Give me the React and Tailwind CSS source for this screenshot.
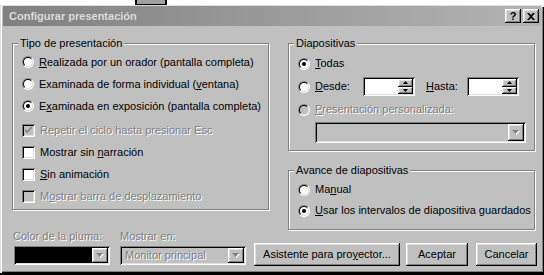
import React from 'react';

const raised =
  'shadow-[inset_-1px_-1px_0_#000,inset_1px_1px_0_#fff,inset_-2px_-2px_0_#808080,inset_2px_2px_0_#dfdfdf]';
const sunken =
  'shadow-[inset_1px_1px_0_#808080,inset_-1px_-1px_0_#fff,inset_2px_2px_0_#000,inset_-2px_-2px_0_#dfdfdf]';
const dim = 'text-[#808080] [text-shadow:1px_1px_0_#fff]';

function U({ children }) {
  return <span className="underline underline-offset-[1px] decoration-1">{children}</span>;
}

function Radio({ checked, disabled }) {
  return (
    <span className="w-[12px] h-[12px] shrink-0 rounded-full border border-t-[#808080] border-l-[#808080] border-r-white border-b-white">
      <span
        className={`flex items-center justify-center w-[10px] h-[10px] rounded-full border border-t-black border-l-black border-r-[#dfdfdf] border-b-[#dfdfdf] ${
          disabled ? 'bg-[#c0c0c0]' : 'bg-white'
        }`}
      >
        {checked && <span className="w-[4px] h-[4px] rounded-full bg-black" />}
      </span>
    </span>
  );
}

function Check({ checked, disabled }) {
  return (
    <span className={`w-[13px] h-[13px] shrink-0 flex items-center justify-center ${sunken} ${disabled ? 'bg-[#c0c0c0]' : 'bg-white'}`}>
      {checked && (
        <svg width="7" height="7" viewBox="0 0 7 7">
          <path d="M0 2 L0 4 L2 6 L7 1 L7 -1 L2 4 Z" fill={disabled ? '#808080' : '#000'} />
        </svg>
      )}
    </span>
  );
}

function Arrow({ color = '#000' }) {
  return (
    <svg width="7" height="4" viewBox="0 0 7 4">
      <path d="M0 0 H7 L3.5 4 Z" fill={color} />
    </svg>
  );
}

function DropButton({ disabled }) {
  return (
    <span className={`w-[16px] h-full flex items-center justify-center bg-[#c0c0c0] ${raised}`}>
      {disabled ? (
        <svg width="8" height="5" viewBox="0 0 8 5">
          <path d="M1 1 H8 L4.5 5 Z" fill="#fff" />
          <path d="M0 0 H7 L3.5 4 Z" fill="#808080" />
        </svg>
      ) : (
        <Arrow />
      )}
    </span>
  );
}

function Spin() {
  return (
    <div className={`w-[52px] h-[19px] flex p-[2px] bg-white ${sunken}`}>
      <div className="flex-1" />
      <div className="w-[15px] flex flex-col">
        <span className={`flex-1 flex items-center justify-center bg-[#c0c0c0] ${raised}`}>
          <svg width="5" height="3" viewBox="0 0 5 3">
            <path d="M0 3 H5 L2.5 0 Z" fill="#000" />
          </svg>
        </span>
        <span className={`flex-1 flex items-center justify-center bg-[#c0c0c0] ${raised}`}>
          <svg width="5" height="3" viewBox="0 0 5 3">
            <path d="M0 0 H5 L2.5 3 Z" fill="#000" />
          </svg>
        </span>
      </div>
    </div>
  );
}

function Row({ children, h = 'h-[22px]' }) {
  return <div className={`flex items-center gap-[5px] ${h}`}>{children}</div>;
}

function Group({ title, className, children }) {
  return (
    <fieldset
      className={`border border-[#808080] shadow-[inset_1px_1px_0_#fff,1px_1px_0_#fff] ${className}`}
    >
      <legend className="-ml-[4px] px-[2px] h-[14px] leading-[14px] bg-[#c0c0c0]">{title}</legend>
      {children}
    </fieldset>
  );
}

export default function App() {
  return (
    <div className="w-[544px] h-[275px] overflow-hidden bg-white font-['Liberation_Sans',Arial,sans-serif] text-[11px] text-black">
      {/* bit of the window behind */}
      <div className="h-[5px] flex">
        <div className="ml-[135px] w-[32px] h-[5px] border-x-2 border-b border-black bg-[#a0a0a0]" />
      </div>

      <div className="h-[270px] px-[3px] pt-[1px] bg-[#c0c0c0] border-b-2 border-black shadow-[inset_1px_1px_0_#dfdfdf,inset_2px_2px_0_#fff,inset_-1px_-1px_0_#000,inset_-2px_-2px_0_#808080]">
        {/* title bar */}
        <div className="h-[20px] flex items-center pl-[6px] pr-[2px] bg-gradient-to-r from-[#808080] to-[#b4b4b4]">
          <span className="flex-1 font-bold text-[11px] text-[#dcdcdc]">Configurar presentación</span>
          <button className={`w-[16px] h-[14px] flex items-center justify-center bg-[#c0c0c0] font-bold text-[11px] leading-none ${raised}`}>
            ?
          </button>
          <button className={`ml-[2px] w-[16px] h-[14px] flex items-center justify-center bg-[#c0c0c0] ${raised}`}>
            <svg width="8" height="7" viewBox="0 0 8 7">
              <path d="M0 0 H2 L4 2 L6 0 H8 L5 3.5 L8 7 H6 L4 5 L2 7 H0 L3 3.5 Z" fill="#000" />
            </svg>
          </button>
        </div>

        {/* main groups */}
        <div className="flex items-start mt-[10px] pl-[9px]">
          <Group title="Tipo de presentación" className="w-[257px] pl-[9px] pt-[1px] pb-[2px]">
            <Row>
              <Radio />
              <span>
                <U>R</U>ealizada por un orador (pantalla completa)
              </span>
            </Row>
            <Row>
              <Radio />
              <span>
                Examinada de forma individual (<U>v</U>entana)
              </span>
            </Row>
            <Row>
              <Radio checked />
              <span>
                E<U>x</U>aminada en exposición (pantalla completa)
              </span>
            </Row>
            <div className="mt-[2px]">
              <Row>
                <Check checked disabled />
                <span className={dim}>Repetir el ciclo hasta presionar Esc</span>
              </Row>
              <Row>
                <Check />
                <span>
                  Mostrar sin <U>n</U>arración
                </span>
              </Row>
              <Row>
                <Check />
                <span>
                  <U>S</U>in animación
                </span>
              </Row>
              <Row>
                <Check disabled />
                <span className={dim}>
                  M<U>o</U>strar barra de desplazamiento
                </span>
              </Row>
            </div>
          </Group>

          <div className="ml-[19px] w-[247px]">
            <Group title="Diapositivas" className="pl-[9px] pt-[2px] pb-[7px]">
              <Row h="h-[23px]">
                <Radio checked />
                <span>
                  <U>T</U>odas
                </span>
              </Row>
              <Row h="h-[23px]">
                <Radio />
                <span className="w-[43px]">
                  <U>D</U>esde:
                </span>
                <Spin />
                <span className="ml-[6px] w-[36px]">
                  <U>H</U>asta:
                </span>
                <Spin />
              </Row>
              <Row h="h-[23px]">
                <Radio disabled />
                <span className={dim}>
                  <U>P</U>resentación personalizada:
                </span>
              </Row>
              <div className={`ml-[17px] mt-[1px] w-[211px] h-[21px] flex justify-end p-[2px] bg-[#c0c0c0] ${sunken}`}>
                <DropButton disabled />
              </div>
            </Group>

            <Group title="Avance de diapositivas" className="mt-[12px] pl-[9px] pt-[2px] pb-[8px]">
              <Row h="h-[21px]">
                <Radio />
                <span>
                  Ma<U>n</U>ual
                </span>
              </Row>
              <Row h="h-[21px]">
                <Radio checked />
                <span>
                  <U>U</U>sar los intervalos de diapositiva guardados
                </span>
              </Row>
            </Group>
          </div>
        </div>

        {/* bottom row */}
        <div className="flex items-start pl-[10px]">
          <div className="w-[97px]">
            <div className={`h-[13px] leading-[13px] ${dim}`}>Color de la pluma:</div>
            <div className={`mt-[3px] ml-[1px] h-[19px] flex p-[2px] bg-[#c0c0c0] ${sunken}`}>
              <div className="flex-1 bg-black" />
              <DropButton disabled />
            </div>
          </div>
          <div className="ml-[10px] w-[126px]">
            <div className={`h-[13px] leading-[13px] ${dim}`}>Mostrar en:</div>
            <div className={`mt-[3px] h-[19px] flex items-center p-[2px] bg-[#c0c0c0] ${sunken}`}>
              <span className={`flex-1 pl-[3px] ${dim}`}>Monitor principal</span>
              <DropButton disabled />
            </div>
          </div>
          <button className={`ml-[8px] mt-[13px] w-[146px] h-[23px] bg-[#c0c0c0] ${raised}`}>
            Asistente para pro<U>y</U>ector...
          </button>
          <button className={`ml-[6px] mt-[13px] w-[62px] h-[23px] bg-[#c0c0c0] ${raised}`}>Aceptar</button>
          <button className={`ml-[8px] mt-[13px] w-[61px] h-[23px] bg-[#c0c0c0] ${raised}`}>Cancelar</button>
        </div>
      </div>
    </div>
  );
}
